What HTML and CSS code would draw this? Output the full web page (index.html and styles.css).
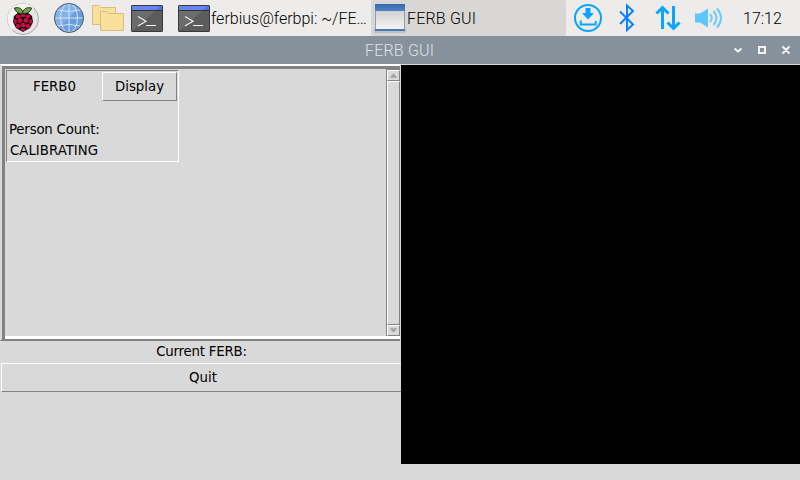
FILE: index.html
```html
<!DOCTYPE html>
<html lang="en">
<head>
<meta charset="utf-8">
<title>FERB GUI</title>
<link rel="stylesheet" href="styles.css">
</head>
<body>
<svg class="defs" aria-hidden="true">
  <symbol id="term" viewBox="0 0 32 27">
    <rect x=".5" y=".5" width="31" height="26" rx=".6" fill="#5c5c5c" stroke="#38393d"/>
    <path d="M1 6h23L1 26z" fill="#6c6c6c"/>
    <path d="M1 1h30v4H1z" fill="#5273dc"/><path d="M1 1h28l-4 4H1z" fill="#6886f0"/>
    <path d="M1 5.500h30" stroke="#303338"/>
    <path d="M7 11.500l8 4.700L7 21M15 20.500h10" fill="none" stroke="#f2f2f2" stroke-width="1.200"/>
  </symbol>
</svg>
<header class="panel">
  <svg class="menu" viewBox="0 0 34 34">
    <circle cx="17" cy="17" r="15.500" fill="#e5e5e5" stroke="#aaa"/>
    <path d="M6 28A15 15 0 0 1 28 6z" fill="#f3f3f3"/>
    <path d="M13 10h8l5 4 1 6-3 6-7 4-7-4-3-6 1-6z" fill="#19070d"/>
    <path d="M16.800 11.500C12 12 9 9 8.500 6c4-1 7.500 0 8.300 4.500C18 6 21.500 5 25.500 6 25 9 22 12 16.800 11.500z" fill="#68a842" stroke="#27311d"/>
    <g fill="#c70b43"><ellipse cx="17" cy="13.500" rx="2.700" ry="1.600"/><ellipse cx="12" cy="14.500" rx="2.300" ry="2"/><ellipse cx="22" cy="14.500" rx="2.300" ry="2"/><circle cx="14" cy="18.500" r="2.400"/><circle cx="20" cy="18.500" r="2.400"/><ellipse cx="9.400" cy="19.500" rx="1.500" ry="2.400"/><ellipse cx="24.600" cy="19.500" rx="1.500" ry="2.400"/><circle cx="17" cy="23.200" r="2.400"/><circle cx="12" cy="24" r="2.200"/><circle cx="22" cy="24" r="2.200"/><ellipse cx="17" cy="27.600" rx="2.400" ry="1.300"/></g>
  </svg>
  <svg class="globe" viewBox="0 0 32 32">
    <circle cx="16" cy="16" r="14.500" fill="#679edb"/>
    <path d="M5.700 26.300A14.500 14.500 0 0 1 26.300 5.700z" fill="#83b1e9"/>
    <g fill="none" stroke="#d5e5f6" stroke-width="1"><path d="M16 1v30M1 16h30M4 8q12 3 24 0M4 24q12-3 24 0"/><ellipse cx="16" cy="16" rx="8.500" ry="14.500"/></g>
    <circle cx="16" cy="16" r="14.500" fill="none" stroke="#4b5968"/>
  </svg>
  <svg class="files" viewBox="0 0 33 28">
    <g fill="#f8e09b" stroke="#d7bc85"><path d="M.5 19.500V.5h6l2 2h15v17z"/><path d="M8.500 25.500V6.500h6l2 2h15v17z"/></g>
  </svg>
  <svg class="term"><use href="#term"/></svg>
  <div class="task task-term"><svg class="term"><use href="#term"/></svg><span>ferbius@ferbpi: ~/FE…</span></div>
  <div class="task task-active">
    <svg class="app" viewBox="0 0 32 30">
      <defs><linearGradient id="pane" x2="0" y2="1"><stop stop-color="#d2d2d2"/><stop offset="1" stop-color="#f4f4f4"/></linearGradient><linearGradient id="bar" x2="0" y2="1"><stop stop-color="#3668ad"/><stop offset="1" stop-color="#5083c4"/></linearGradient></defs>
      <path d="M0 26h32v4H0z" fill="#c0c0be"/><path d="M1 1h30v27H1z" fill="#8d9db3"/><path d="M1 1h30v7H1z" fill="url(#bar)"/><path d="M2 8h28v18H2z" fill="url(#pane)"/><path d="M1 26h30v2H1z" fill="#4778b9"/>
    </svg><span>FERB GUI</span>
  </div>
  <svg class="tray" viewBox="0 0 160 36">
    <g fill="none" stroke="#0aa5ff" stroke-width="2"><circle cx="22" cy="18" r="13"/><path d="M14.700 20.500v4h15v-3.500"/></g>
    <path d="M19.500 8h5v5H28l-6 6.500-6-6.500h3.500z" fill="#0aa5ff"/>
    <path d="M54 11.500l13 13-6 5.500V5.500l6 5.500-13 13" fill="none" stroke="#0a82ff" stroke-width="2"/>
    <path d="M96.500 29V8m-6 5.500l6-6 6 6M107.500 6v21m-6-4.500l6 6 6-6" fill="none" stroke="#0aa5ff" stroke-width="3"/>
    <path d="M129 13.500h5l8-5v19l-8-5h-5z" fill="#5dc6ff"/>
    <path d="M144 14q3.500 4 0 8M147.500 11q6 7 0 14M151 8.500q8 9.500 0 19" fill="none" stroke="#6dcaff" stroke-width="2"/>
  </svg>
  <time>17:12</time>
</header>
<div class="titlebar">
  <h1>FERB GUI</h1>
  <svg class="controls" viewBox="0 0 72 28">
    <g fill="none" stroke="#f4f4f4" stroke-width="2"><path d="M6.500 12.500l3.500 3 3.500-3M31 11h6v6h-6zM54.500 10.500l7 7m0-7l-7 7"/></g>
  </svg>
</div>
<main>
  <section class="side">
    <div class="list">
      <div class="items">
        <article class="card">
          <div class="card-head"><span>FERB0</span><button>Display</button></div>
          <p class="label">Person Count:</p>
          <p class="value">CALIBRATING</p>
        </article>
      </div>
      <div class="scroll">
        <svg viewBox="0 0 12 12"><path d="M1 9h10L6 3z" fill="#a3a3a3"/></svg>
        <div class="thumb"></div>
        <svg viewBox="0 0 12 12"><path d="M1 3h10L6 9z" fill="#a3a3a3"/></svg>
      </div>
    </div>
    <div class="current">Current FERB:</div>
    <button class="quit">Quit</button>
  </section>
  <section class="view"></section>
</main>
</body>
</html>
```
FILE: styles.css
```css
* { box-sizing: border-box; }
body { margin: 0; width: 800px; height: 480px; overflow: hidden; background: #d9d9d9; color: #000; font: 13.33px/20px "DejaVu Sans", sans-serif; }
svg { display: block; flex: none; }
.defs { position: absolute; width: 0; height: 0; }
.panel { display: flex; align-items: center; height: 36px; background: #edecea; font: 300 16px/36px Roboto, sans-serif; }
.panel span, time { padding-top: 1px; }
.menu { width: 34px; height: 34px; margin: 1px 0 0 6px; }
.globe { width: 32px; height: 32px; margin-left: 13px; }
.files { width: 33px; height: 28px; margin: 2px 6px 0 7px; }
.term { width: 32px; height: 27px; margin-top: 1px; }
.task { display: flex; align-items: center; height: 36px; white-space: nowrap; }
.task-term { width: 193px; margin-left: 15px; }
.task-term span { margin-left: 1px; }
.task-active { width: 195px; padding-left: 3px; background: #d8d7d5; border-radius: 2px; letter-spacing: .2px; }
.task-active span { margin-left: 1px; }
.app { width: 32px; height: 30px; }
.tray { width: 160px; height: 36px; }
time { margin-left: 17px; }
.titlebar { display: flex; height: 28px; background: #87919b; }
h1 { margin: 0; width: 728px; padding-left: 365px; color: #dfe2e5; font: 300 16px/30px Roboto, sans-serif; letter-spacing: .2px; }
.controls { width: 72px; height: 28px; }
main { display: flex; height: 416px; border-top: 1px solid #d9d9d9; }
.side { width: 401px; }
.view { width: 399px; height: 399px; background: #000; }
.list { display: flex; width: 400px; height: 277px; border: solid; border-width: 2px 0 2px 2px; border-color: #fff #fff #828282 #d9d9d9; box-shadow: inset 3px 3px #828282, inset 0 -3px #fff; padding: 3px 0 3px 3px; margin-top: -1px; }
.items { width: 381px; padding: 1px; }
.card { width: 173px; height: 92px; border: 1px solid; border-color: #828282 #fff #fff #828282; }
.card-head { display: flex; height: 31px; padding-top: 1px; }
.card-head span { width: 95px; text-align: center; line-height: 30px; }
button { padding: 0; border: 1px solid; border-color: #fff #828282 #828282 #fff; background: #d9d9d9; color: #000; font: inherit; }
.card-head button { width: 75px; height: 29px; }
p { margin: 0; padding-left: 3px; }
.label { margin-top: 18px; padding-left: 2px; letter-spacing: -.2px; }
.value { margin-top: 1px; }
.scroll { width: 14px; border-left: 1px solid #828282; border-top: 1px solid #828282; display: flex; flex-direction: column; }
.scroll svg { width: 13px; height: 11px; border: 1px solid; border-color: #fff #828282 #828282 #fff; }
.thumb { flex: 1; border: 1px solid; border-color: #fff #828282 #828282 #fff; }
.current { width: 403px; height: 22px; text-align: center; line-height: 22px; letter-spacing: -.2px; }
.quit { display: block; width: 400px; height: 29px; margin-left: 1px; border-right: 0; padding-left: 3px; }
```
